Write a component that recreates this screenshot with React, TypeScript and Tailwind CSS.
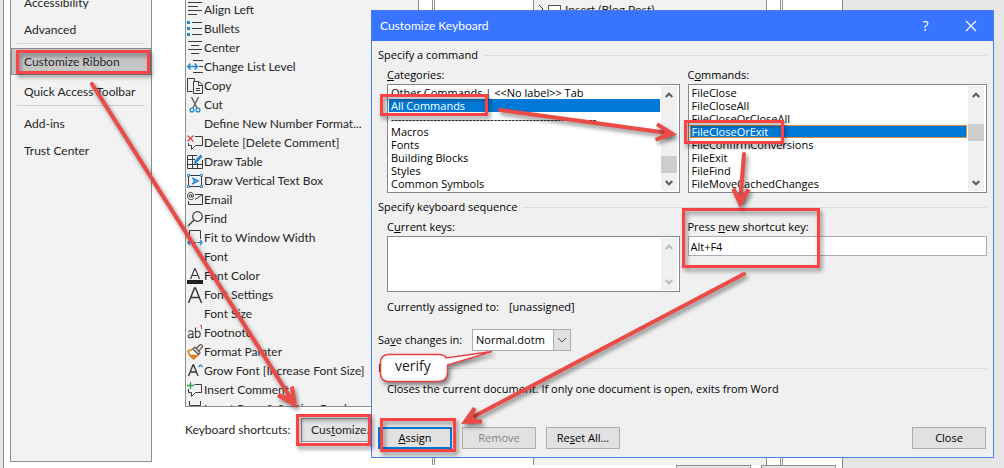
import type { ReactNode } from "react";

const INK = "#3b3b3b";
const BLUE = "#1e88d2";

function Icon({ children }: { children?: ReactNode }) {
  return (
    <svg viewBox="0 0 16 16" fill="none" stroke={INK} className="h-4 w-4 shrink-0" aria-hidden="true">
      {children}
    </svg>
  );
}

const bigA = "M1.5 16 L7.5 1 L8.5 1 L14.5 16 M4 10.5 H12";

const commands: { label: string; icon?: ReactNode }[] = [
  { label: "Align Left", icon: <path d="M1 .5H15M1 4.5H11M1 8.5H15M1 12.5H10" /> },
  {
    label: "Bullets",
    icon: (
      <>
        <path d="M5 1.500H15M5 7.500H15M5 13.500H15" />
        <path d="M0 0h3v3H0zM0 6h3v3H0zM0 12h3v3H0z" fill={BLUE} stroke="none" />
      </>
    ),
  },
  { label: "Center", icon: <path d="M1 1.5H15M4 5.5H12M1 9.5H15M4 13.5H12" /> },
  {
    label: "Change List Level",
    icon: (
      <>
        <path d="M6 1.500H16M12 7.500H16M6 13.500H16" />
        <path d="M.7 7.500H10.500M3.500 4.500L.7 7.500L3.500 10.500M7.700 4.500L10.500 7.500L7.700 10.500" stroke={BLUE} strokeWidth="1.400" />
      </>
    ),
  },
  {
    label: "Copy",
    icon: (
      <>
        <path d="M5.500 13.500H.5V.5H7.500V3" />
        <path d="M6.500 3.500H12L15.500 7V15.500H6.500ZM11.500 3.500V7.500H15.500M9 10.500H13M9 12.500H13" />
      </>
    ),
  },
  {
    label: "Cut",
    icon: (
      <>
        <path d="M4.500 0L10 11M11.500 0L6 11" stroke="#666" strokeWidth="1.500" />
        <circle cx="5" cy="13" r="1.900" stroke={BLUE} strokeWidth="1.300" />
        <circle cx="11" cy="13" r="1.900" stroke={BLUE} strokeWidth="1.300" />
      </>
    ),
  },
  { label: "Define New Number Format..." },
  {
    label: "Delete [Delete Comment]",
    icon: (
      <>
        <path d="M8 1.500H15.500V10.500H8.500L4.500 14.500V10.500H1.500V8" />
        <path d="M.5 .5L6.500 6.500M6.500 .5L.5 6.500" stroke="#e04848" strokeWidth="1.300" />
      </>
    ),
  },
  {
    label: "Draw Table",
    icon: (
      <>
        <path d="M10 1.500H.5V14.500H15.500V6M.5 5.500H8M.5 10.500H15M5.500 1.500V14.500M10.500 9V14.500" />
        <path d="M14.500 1.500L8 8.500" stroke={BLUE} strokeWidth="2.800" />
        <path d="M8.500 7L6 11L10 9Z" fill={BLUE} stroke="none" />
      </>
    ),
  },
  {
    label: "Draw Vertical Text Box",
    icon: (
      <>
        <path d="M3 2.500H13M3 13.500H13M1.500 4V12M14.500 4V12" />
        <path d="M.5 1.500h2v2h-2zM13.500 1.500h2v2h-2zM.5 12.500h2v2h-2zM13.500 12.500h2v2h-2z" stroke={BLUE} />
        <path d="M5 5L11 8L5 11M7 6V10" stroke={BLUE} strokeWidth="1.500" />
      </>
    ),
  },
  {
    label: "Email",
    icon: (
      <>
        <path d="M1.500 9V12.500H15.500V2.500H8M8 7.500L15.500 2.500" />
        <path d="M6.500 6.500C4.500 8.500 .5 7.500 .5 4.500C.5 1.500 2 .5 3.800 .5C5.500 .5 6.500 2 6.500 4C6.500 5.500 4.800 5.500 4.800 4.500V2.500" />
        <circle cx="3.500" cy="4" r="1.300" />
      </>
    ),
  },
  {
    label: "Find",
    icon: (
      <>
        <circle cx="10.500" cy="5.500" r="4.800" strokeWidth="1.200" />
        <path d="M7 9L1 15" strokeWidth="1.400" />
      </>
    ),
  },
  {
    label: "Fit to Window Width",
    icon: (
      <>
        <path d="M2.500 10V.5H13.500V9M5 12.500H9" />
        <path d="M6 12.500H.8M3 10L.8 12.500L3 15M10 12.500H15.200M13 10L15.200 12.500L13 15" stroke={BLUE} strokeWidth="1.200" />
      </>
    ),
  },
  { label: "Font" },
  {
    label: "Font Color",
    icon: (
      <>
        <path d="M3.500 11L7.700 .8H8.300L12.500 11M5 7.500H11" strokeWidth="1.200" />
        <path d="M0 12h16v4H0z" fill="#222" stroke="none" />
      </>
    ),
  },
  { label: "Font Settings", icon: <path d={bigA} strokeWidth="1.500" /> },
  { label: "Font Size" },
  {
    label: "Footnote",
    icon: (
      <>
        <path d="M1.500 6.500C3 5.300 6 5.300 6 7.500V13M6 9C3.500 9 1.200 9.500 1.200 11.200C1.200 13.500 5 13.300 6 11M8.500 2.500V13M8.500 8C9.500 5.500 13.200 5.500 13.200 9.300C13.200 13 9.500 13.200 8.500 11" strokeWidth="1.100" />
        <path d="M13 1L14.500 0V4" stroke="#e04848" />
      </>
    ),
  },
  {
    label: "Format Painter",
    icon: (
      <>
        <path d="M1 7L6 5L11.500 10.500L7 15C5 14 2 11 1 7Z" fill="#fff" stroke="#dd7a1c" strokeWidth="1.400" />
        <path d="M3 10.500L10 11L7 15Z" fill="#dd7a1c" stroke="none" />
        <path d="M6 5L8 3L13 8.500L11.500 10.500ZM9.500 4.500L12.500 1C14 0 16 1.500 15 3.200L12 7" fill="#eee" stroke="#555" strokeWidth="1.200" />
      </>
    ),
  },
  {
    label: "Grow Font [Increase Font Size]",
    icon: (
      <>
        <path d="M1.500 13L6 2H6.600L11 13M3.200 9H9.400" strokeWidth="1.400" />
        <path d="M11.500 4L13.500 2L15.500 4" stroke={BLUE} strokeWidth="1.200" />
      </>
    ),
  },
  {
    label: "Insert Comment",
    icon: (
      <>
        <path d="M7.500 2.500H14.500V10.500H8.500L4.500 14.500V10.500H1.500V7" />
        <path d="M3.500 0V7M0 3.500H7" stroke="#2f9e4f" strokeWidth="1.300" />
      </>
    ),
  },
  { label: "Insert Page & Section Breaks", icon: <path d="M2.500 0V4.500H13.500V0M2.500 12V9.500H13.500V12" /> },
];

function NavItem({ children, active }: { children: ReactNode; active?: boolean }) {
  return (
    <li>
      <a
        href="#"
        className={
          active
            ? "mb-[3px] mt-1 flex h-[27px] items-center whitespace-nowrap border border-[#8c8c8c] bg-[#c6c6c6] px-3"
            : "flex h-[27px] items-center whitespace-nowrap px-[13px]"
        }
      >
        {children}
      </a>
    </li>
  );
}

function NavRule() {
  return <li role="separator" className="mx-[6px] h-px bg-[#d0d0d0]" />;
}

function ScrollBar({ thumb, muted }: { thumb?: string; muted?: boolean }) {
  const color = muted ? "#bdbdbd" : "#5c5c5c";
  return (
    <div className="relative flex w-4 shrink-0 flex-col items-center justify-between bg-[#f0f0f0] py-[5px]">
      <svg viewBox="0 0 8 6" className="mt-px h-[6px] w-2" fill="none" stroke={color} strokeWidth="2">
        <path d="M.7 5L4 1.700L7.300 5" />
      </svg>
      {thumb && <div className={`absolute inset-x-0 h-[17px] bg-[#cdcdcd] ${thumb}`} />}
      <svg viewBox="0 0 8 6" className="h-[6px] w-2" fill="none" stroke={color} strokeWidth="2">
        <path d="M.7 1L4 4.300L7.300 1" />
      </svg>
    </div>
  );
}

function ListBox({ id, items, selected, focus, thumb }: { id: string; items: string[]; selected: string; focus?: boolean; thumb: string }) {
  return (
    <div className="flex h-[109px] border border-[#828790] bg-white p-px pr-[2px]">
      <ul role="listbox" aria-labelledby={id} className="min-w-0 flex-1 overflow-hidden pr-px">
        {items.map((item) => (
          <li
            key={item}
            role="option"
            aria-selected={item === selected}
            className={
              item === selected
                ? focus
                  ? "h-[13px] whitespace-nowrap bg-[#0078d7] pl-[2px] leading-[13px] text-white outline-1 -outline-offset-1 outline-[#e08a3c]"
                  : "h-[13px] whitespace-nowrap bg-[#0078d7] pl-[2px] leading-[13px] text-white"
                : "h-[13px] whitespace-nowrap pl-[2px] leading-[13px]"
            }
          >
            {item}
          </li>
        ))}
      </ul>
      <ScrollBar thumb={thumb} />
    </div>
  );
}

function Heading({ children }: { children: ReactNode }) {
  return (
    <h2 className="flex h-4 items-center gap-[6px] leading-4">
      {children}
      <span className="h-px flex-1 bg-[#dcdcdc]" />
    </h2>
  );
}

function DialogButton({ children, kind }: { children: ReactNode; kind?: "default" | "disabled" }) {
  return (
    <button
      type="button"
      disabled={kind === "disabled"}
      className={
        kind === "default"
          ? "h-[22px] w-[74px] border-2 border-[#0078d7] bg-[#e1e1e1] leading-4"
          : kind === "disabled"
            ? "h-[22px] w-[74px] border border-[#b0b0b0] bg-[#e1e1e1] leading-4 text-[#838383]"
            : "h-[22px] w-[74px] border border-[#adadad] bg-[#e1e1e1] leading-4"
      }
    >
      {children}
    </button>
  );
}

function KeyboardDialog() {
  return (
    <section
      role="dialog"
      aria-labelledby="dialog-title"
      className="absolute left-[371px] right-[10px] top-[10px] flex flex-col border border-[#4a7fe6] bg-[#f0f0f0] font-['Open_Sans','Noto_Sans',sans-serif] text-[11px] text-black"
    >
      <header className="flex h-[30px] items-center bg-[#3874ff] pl-2 text-white">
        <h1 id="dialog-title" className="flex-1 font-['Lato','Noto_Sans',sans-serif] text-[12px]">Customize Keyboard</h1>
        <button type="button" aria-label="Help" className="w-[45px] text-sm">?</button>
        <button type="button" aria-label="Close" className="flex w-[45px] justify-center">
          <svg viewBox="0 0 12 12" className="h-3 w-3" stroke="#fff" strokeWidth="1.200">
            <path d="M1 1L11 11M11 1L1 11" />
          </svg>
        </button>
      </header>
      <div className="px-[6px] pb-2 pt-[6px]">
        <Heading>Specify a command</Heading>
        <div className="grid grid-cols-[293fr_300fr] gap-x-2 pl-[9px] pt-1">
          <div>
            <div id="categories" className="h-[17px] leading-4"><u>C</u>ategories:</div>
            <ListBox
              id="categories"
              selected="All Commands"
              thumb="top-[70px]"
              items={[
                "Other Commands | <<No label>> Tab",
                "All Commands",
                "----------------------------------------------------------",
                "Macros",
                "Fonts",
                "Building Blocks",
                "Styles",
                "Common Symbols",
              ]}
            />
          </div>
          <div>
            <div id="commands" className="h-[17px] leading-4">C<u>o</u>mmands:</div>
            <ListBox
              id="commands"
              selected="FileCloseOrExit"
              focus
              thumb="top-[38px]"
              items={[
                "FileClose",
                "FileCloseAll",
                "FileCloseOrCloseAll",
                "FileCloseOrExit",
                "FileConfirmConversions",
                "FileExit",
                "FileFind",
                "FileMoveCachedChanges",
              ]}
            />
          </div>
        </div>
        <div className="pt-[6px]">
          <Heading>Specify keyboard sequence</Heading>
        </div>
        <div className="grid grid-cols-[293fr_300fr] gap-x-2 pl-[9px] pt-1">
          <div>
            <label htmlFor="current" className="block h-[17px] leading-4">C<u>u</u>rrent keys:</label>
            <div className="flex h-14 border border-[#828790] bg-white p-px pr-[2px]">
              <textarea id="current" readOnly className="min-w-0 flex-1 resize-none outline-none" />
              <ScrollBar muted />
            </div>
          </div>
          <div>
            <label htmlFor="shortcut" className="block h-[17px] leading-4">Press <u>n</u>ew shortcut key:</label>
            <input id="shortcut" defaultValue="Alt+F4" className="h-5 w-full border border-[#abadb3] bg-white px-[2px] outline-none" />
          </div>
        </div>
        <p className="flex gap-[10px] pl-[9px] pt-[7px] leading-4">
          <span>Currently assigned to:</span>
          <span>[unassigned]</span>
        </p>
        <div className="flex items-center gap-2 pt-[14px]">
          <label htmlFor="save-in" className="w-[86px] whitespace-nowrap">Sa<u>v</u>e changes in:</label>
          <div className="relative">
            <select id="save-in" className="h-[22px] w-[99px] appearance-none border border-[#adadad] bg-white pl-[3px] outline-none">
              <option>Normal.dotm</option>
            </select>
            <span className="pointer-events-none absolute inset-y-0 right-0 flex w-[18px] items-center justify-center border border-[#adadad] bg-[#e1e1e1]">
              <svg viewBox="0 0 10 6" className="h-[6px] w-[10px]" fill="none" stroke="#444">
                <path d="M1 1L5 5L9 1" />
              </svg>
            </span>
          </div>
        </div>
        <div className="pt-[9px]">
          <Heading>Description</Heading>
        </div>
        <p className="pl-[9px] pt-[5px] leading-4">
          Closes the current document. If only one document is open, exits from Word
        </p>
        <div className="flex gap-[10px] pr-px pt-[30px]">
          <DialogButton kind="default"><u>A</u>ssign</DialogButton>
          <DialogButton kind="disabled">Remove</DialogButton>
          <DialogButton>Re<u>s</u>et All...</DialogButton>
          <span className="flex-1" />
          <DialogButton>Close</DialogButton>
        </div>
      </div>
    </section>
  );
}

const shadow = "drop-shadow-[2px_3px_2px_rgba(0,0,0,0.45)]";

function Annotations() {
  return (
    <div className="pointer-events-none absolute left-0 top-0">
      <svg width="1004" height="468" viewBox="0 0 1004 468" fill="none" className="block">
        <g stroke="#fb4343" strokeWidth="3" className={shadow}>
          <rect x="17.500" y="51.500" width="131" height="21" />
          <rect x="297.500" y="415.500" width="72" height="29" />
          <rect x="381.500" y="95.500" width="105" height="19" />
          <rect x="685.500" y="121.500" width="97" height="21" />
          <rect x="683.500" y="209.500" width="135" height="57" />
          <rect x="381.500" y="419.500" width="73" height="31" />
        </g>
        <g stroke="#ea4b46" strokeWidth="4" strokeLinecap="round" className={shadow}>
          <path d="M92 84L290 397" />
          <path d="M500 110L668 133" />
          <path d="M744 154L740.500 198" />
          <path d="M744 274L471 418" />
        </g>
        <g fill="#ea4b46" className={shadow}>
          <path d="M297 408L277 397L279 393L288 396L291 394L290 387L294 386Z" />
          <path d="M677 134.500L656 141.500L655 138L664 134L664 131L656 126L658 122.500Z" />
          <path d="M740 208L731.500 190L735 187.500L739 195L742 195L747 188.500L750.500 190.500Z" />
          <path d="M461 424L473 407L476.500 409L473 416L475 419L482 419.500L482 423.500Z" />
        </g>
        <path
          d="M389 354.500H438Q445 354.500 446 358L492 351.500L447.500 365V373Q447 381.500 438 381.500H389Q380.500 381.500 380.500 373V363Q380.500 354.500 389 354.500Z"
          fill="#fff"
          stroke="#ea4242"
          strokeWidth="1.500"
          className={shadow}
        />
      </svg>
      <span className="absolute left-[395px] top-[358px] font-['Open_Sans','Noto_Sans',sans-serif] text-[14px] leading-4 text-[#222]">verify</span>
    </div>
  );
}

export default function App() {
  return (
    <div className="relative flex h-screen overflow-hidden bg-[#e6e6e6] pl-[3px] pr-[161px] font-['Lato','Noto_Sans',sans-serif] text-[12px] text-[#262626]">
      <main className="flex min-w-0 flex-1 flex-col border-x border-[#8a8a8a] bg-white">
        <div className="flex min-h-0 flex-1">
          <nav className="mb-[3px] ml-[6px] w-[142px] shrink-0 overflow-hidden border border-t-0 border-[#8f8f8f] bg-[#f2f2f2]">
            <ul className="-mt-[11px]">
              <NavItem>Accessibility</NavItem>
              <NavItem>Advanced</NavItem>
              <NavRule />
              <NavItem active>Customize Ribbon</NavItem>
              <NavItem>Quick Access Toolbar</NavItem>
              <NavRule />
              <li className="h-1" />
              <NavItem>Add-ins</NavItem>
              <NavItem>Trust Center</NavItem>
            </ul>
          </nav>
          <div className="ml-[33px] flex w-[234px] shrink-0 flex-col pb-[23px]">
            <ul className="min-h-0 flex-1 overflow-hidden border border-t-0 border-[#8f8f8f] bg-[#f2f2f2] pl-px">
              {commands.map(({ label, icon }) => (
                <li key={label} className="flex h-[19px] items-center gap-px whitespace-nowrap leading-4">
                  <Icon>{icon}</Icon>
                  {label}
                </li>
              ))}
            </ul>
            <div className="mt-[11px] flex h-6 items-center gap-[14px] whitespace-nowrap">
              <span className="w-[102px]">Keyboard shortcuts:</span>
              <button type="button" className="h-6 w-[84px] border border-[#8f8f8f] bg-[#e4e4e4]">
                Cus<u>t</u>omize...
              </button>
            </div>
          </div>
          <div className="ml-[13px] w-[3px] border-x border-[#8f8f8f]" />
          <div className="flex-1" />
          <div className="flex w-[234px] items-start gap-1 border-x border-[#8f8f8f] bg-[#f2f2f2] pl-1">
            <svg viewBox="0 0 6 10" className="mt-1 h-[10px] w-[6px]" fill="none" stroke="#333">
              <path d="M1 1L5 5L1 9" />
            </svg>
            <label className="flex items-start gap-1 whitespace-nowrap leading-4">
              <input type="checkbox" className="mt-[5px] h-[13px] w-[13px] appearance-none border border-[#555] bg-white" />
              <span className="pt-0.5">Insert (Blog Post)</span>
            </label>
          </div>
          <div className="ml-[13px] mr-[59px] w-[3px] border-x border-[#8f8f8f]" />
        </div>
        <footer className="flex h-[3px] justify-end gap-[10px] overflow-hidden pr-[6px]">
          <button type="button" aria-label="OK" className="h-6 w-[75px] border border-[#8f8f8f] bg-[#e4e4e4]" />
          <button type="button" aria-label="Cancel" className="h-6 w-[75px] border border-[#8f8f8f] bg-[#e4e4e4]" />
        </footer>
      </main>
      <KeyboardDialog />
      <Annotations />
    </div>
  );
}
